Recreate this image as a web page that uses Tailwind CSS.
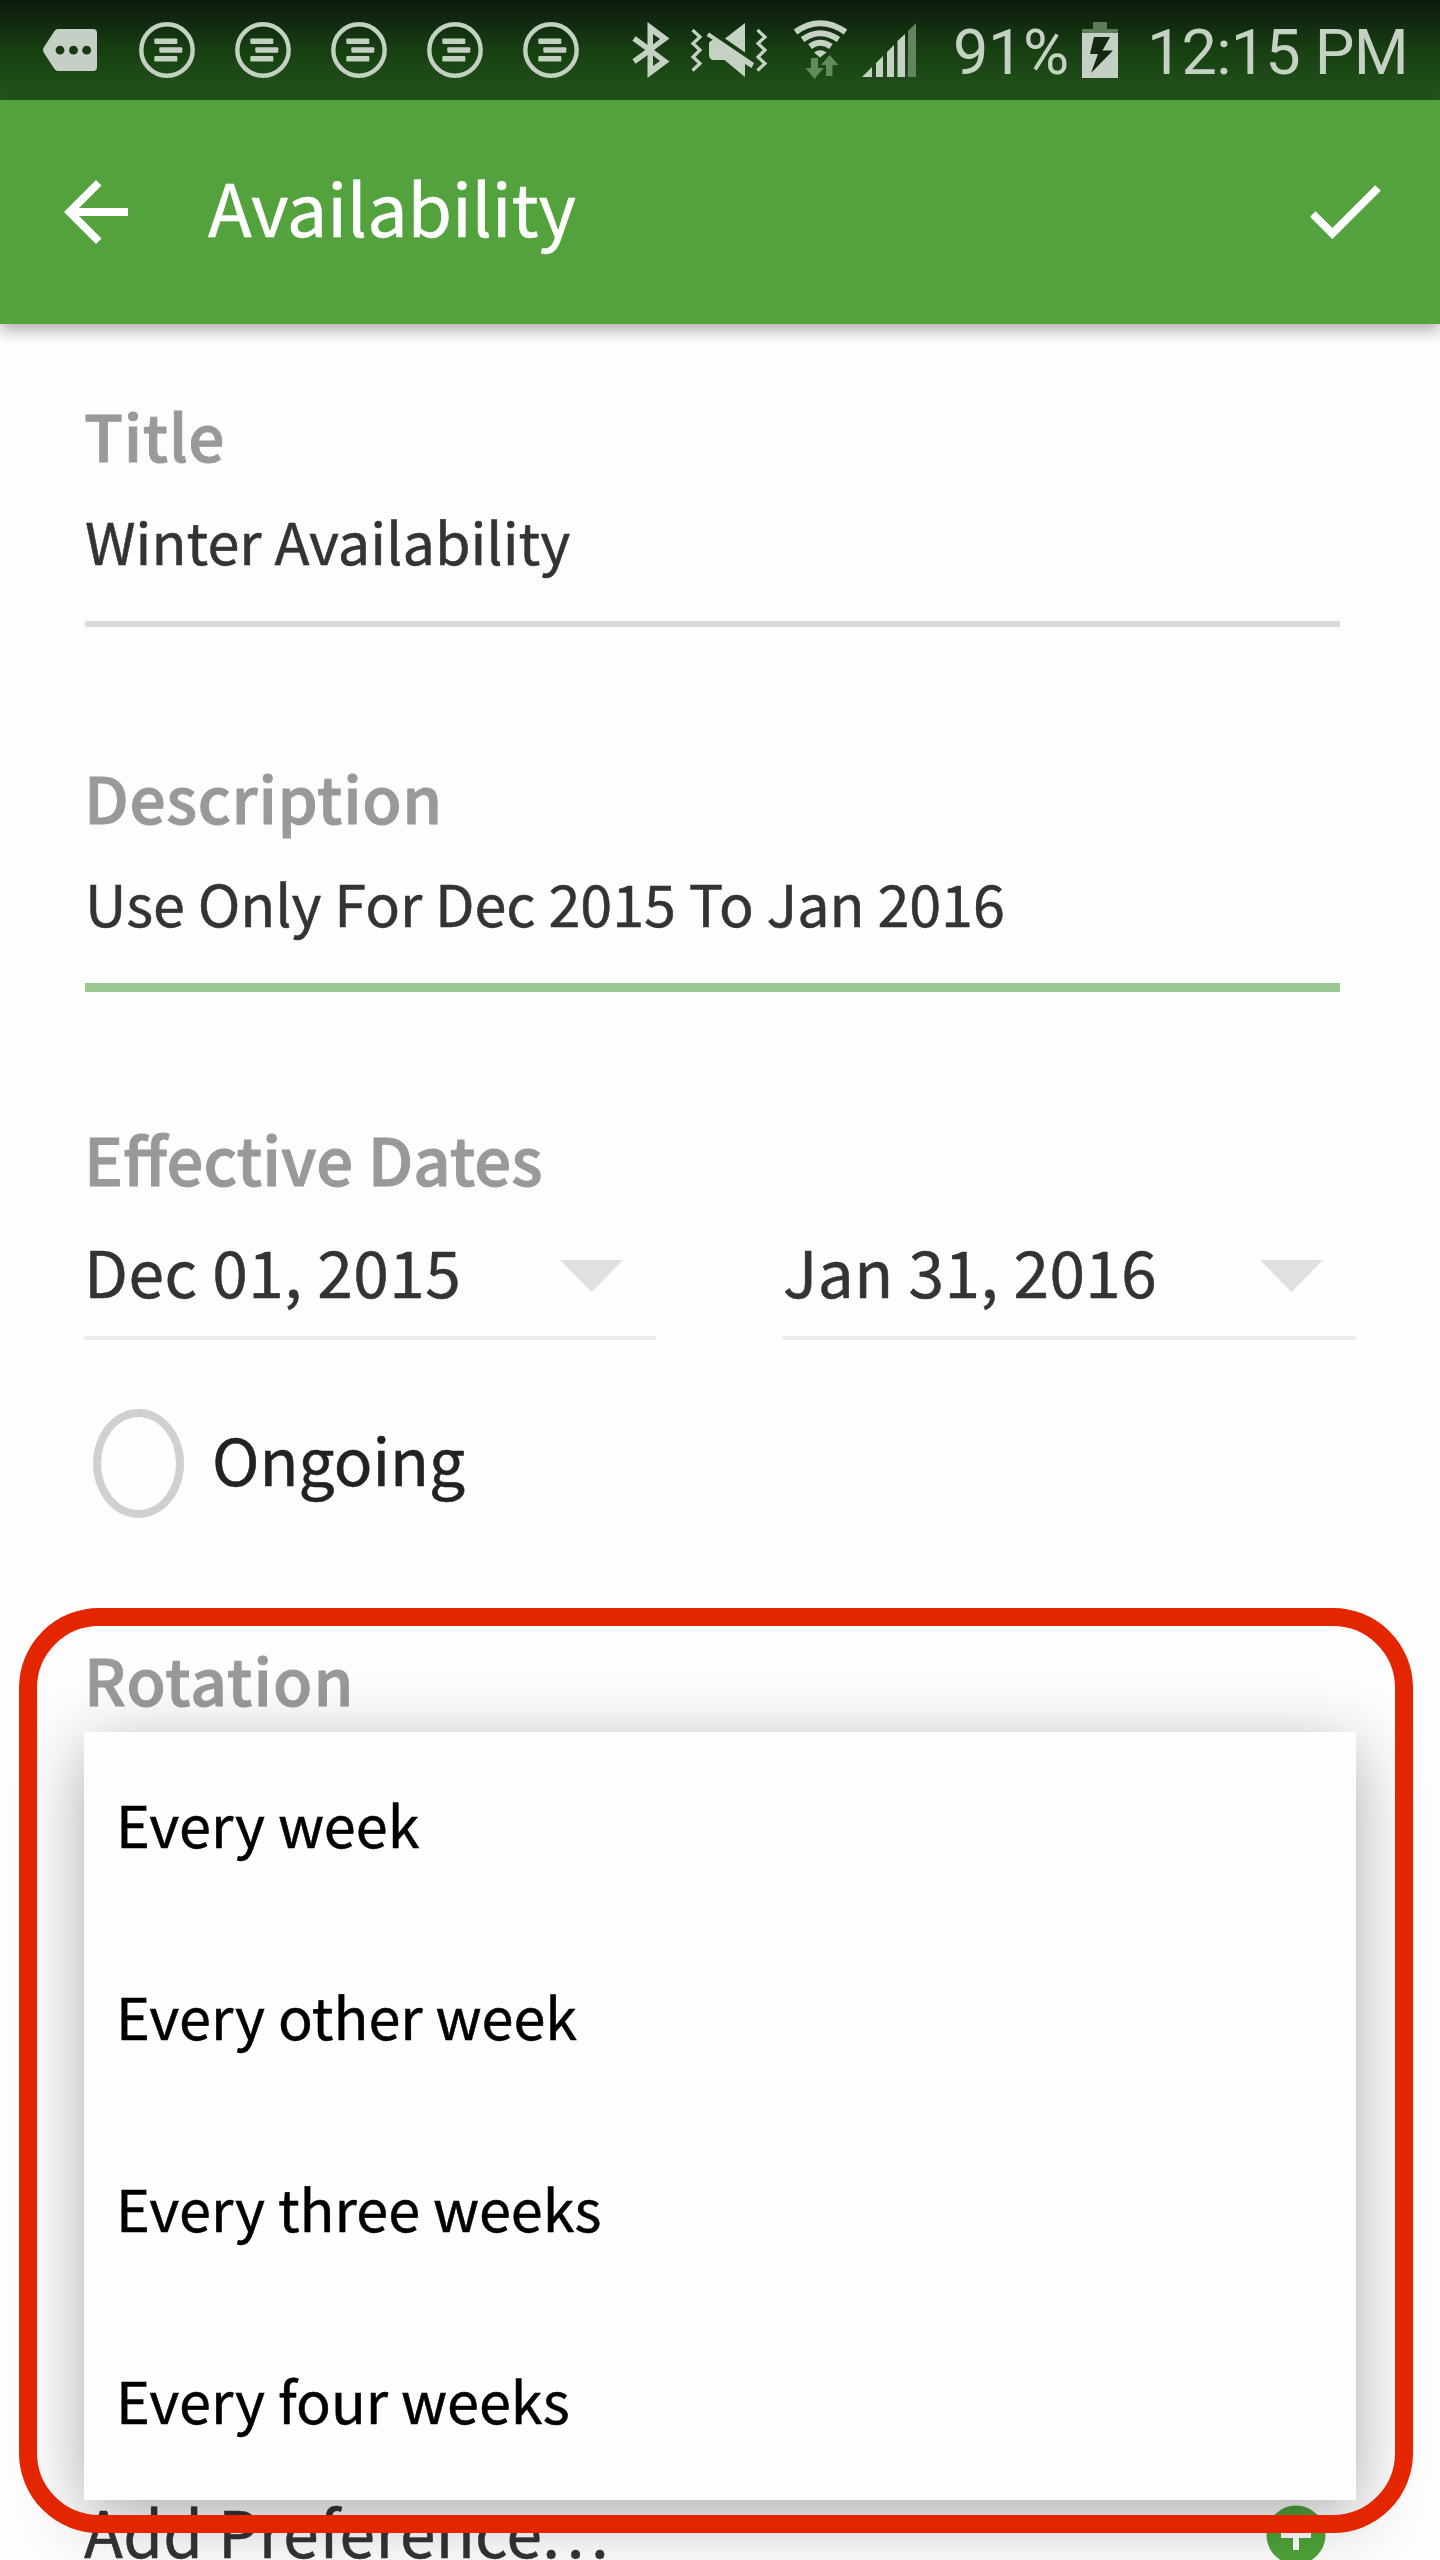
<!DOCTYPE html>
<html lang="en">
<head>
<meta charset="utf-8">
<title>Availability</title>
<script src="https://cdn.jsdelivr.net/npm/@tailwindcss/browser@4"></script>
</head>
<body class="bg-[#fdfdfd]">
<svg class="hidden">
  <symbol id="note" viewBox="0 0 56 56">
    <circle cx="28" cy="28" r="25.7" fill="none" stroke="#c3d2c0" stroke-width="4.4"/>
    <g fill="#c3d2c0"><rect x="15.3" y="16.5" width="23" height="5.6" rx="1"/><rect x="20.3" y="25.2" width="23" height="5.6" rx="1"/><rect x="15.3" y="34" width="23" height="5.6" rx="1"/></g>
  </symbol>
</svg>
<div class="relative flex h-[2560px] w-[1440px] flex-col overflow-hidden font-['Noto_Sans_CJK_SC',sans-serif] text-[#333]">
  <!-- status bar -->
  <header class="flex h-[100px] shrink-0 items-center bg-linear-to-b from-[#0b1a0c] via-[#183f12] to-[#23551c] pl-[42px] font-[Roboto,sans-serif] text-[63px] text-[#c5d2c3]">
    <svg class="h-[44px] w-[56px] shrink-0" viewBox="0 0 56 44"><path d="M16 1H51Q55 1 55 5V39Q55 43 51 43H16Q14 43 12.500 41L2 25Q0 22 2 19L12.500 3Q14 1 16 1Z" fill="#c6cfc6"/><g fill="#163b10"><circle cx="18" cy="22.200" r="4.400"/><circle cx="31.500" cy="22.200" r="4.400"/><circle cx="44.700" cy="22.200" r="4.400"/></g></svg>
    <div class="ml-[41px] flex shrink-0 gap-[40px]">
      <svg class="size-[56px]"><use href="#note"/></svg>
      <svg class="size-[56px]"><use href="#note"/></svg>
      <svg class="size-[56px]"><use href="#note"/></svg>
      <svg class="size-[56px]"><use href="#note"/></svg>
      <svg class="size-[56px]"><use href="#note"/></svg>
    </div>
    <svg class="ml-[41px] h-[100px] w-[304px] shrink-0" viewBox="620 0 304 100" fill="#c5d2c3">
      <path d="M647.500 22V78L669.500 61.500L654 50L669.500 38.500ZM653 34L660 39L653 44.500ZM653 55.500L660 61L653 66Z" fill-rule="evenodd"/>
      <path d="M634 38.500L650 50L634 61.500" fill="none" stroke="#c5d2c3" stroke-width="5.500"/>
      <g fill="none" stroke="#c5d2c3" stroke-width="3.200"><path d="M692.500 30L700 37L693 43.500L700 50L693 57L700 63.500L692.500 70.500"/><path d="M757.500 30L765 37L758 43.500L765 50L758 57L765 63.500L757.500 70.500"/></g>
      <path d="M745 23V52.500L725 38.500ZM709 32.500L754 63L751.500 68L745 64V77L724.500 60H714Q709 60 709 54V44Q709 41 713 40L706.500 36Z"/>
      <g fill="none" stroke="#c5d2c3" stroke-width="6"><path d="M795.500 32Q820 14.500 845.500 32"/><path d="M802.500 39.500Q820 27 838.500 39.500"/><path d="M810 46.500Q820 39 831 46.500"/></g>
      <path d="M814 52.500Q820 48 826.500 52.500L820 57.500Z"/>
      <path d="M811 58H818V68H823.500L814.500 79L805.500 68H811ZM826 76V65H821L829.500 55L838.500 65H832.500V76Z" fill="#628a5a"/>
      <path d="M862 77L872 67V77ZM876 77V63L883 56V77ZM887 77V52L894 45V77ZM897.500 77V41L905 34V77Z"/>
      <path d="M908 77V31L916 23V77Z" fill="#64835f"/>
    </svg>
    <span class="ml-[29px] w-[129px] shrink-0 whitespace-nowrap pt-[6px] leading-[76px] tracking-[-0.4px]">91%</span>
    <svg class="h-[58px] w-[36px] shrink-0" viewBox="0 0 36 58"><path d="M11 1H25V8H36V12H0V8H11Z" fill="#5d7a59"/><path d="M0 12H36V57H0Z" fill="#c5d0c5"/><path d="M12 16H28L20.500 29.500H31L9 52L16 33H8Z" fill="#152812"/></svg>
    <span class="ml-[29px] shrink-0 whitespace-nowrap pt-[6px] leading-[76px] tracking-[-0.8px]">12:15 PM</span>
  </header>
  <!-- app bar -->
  <div class="flex h-[224px] shrink-0 items-center bg-[#54a23e] pl-[64px] text-white shadow-[0_6px_14px_rgba(20,15,30,0.34)]">
    <svg class="h-[66px] w-[64px]" viewBox="0 0 64 66"><path d="M32 1L37.500 6.500L15 29H64V37H15L37.500 59.500L32 65L0 33Z" fill="#fff"/></svg>
    <h1 class="mb-[12px] ml-[80px] flex-1 text-[72px] leading-[72px] tracking-[-0.15px] [-webkit-text-stroke:0.5px_#fff]">Availability</h1>
    <svg class="mr-[59px] h-[54px] w-[71px]" viewBox="0 0 71 54"><path d="M2.800 29L22.300 48.500L68 3" fill="none" stroke="#fff" stroke-width="8"/></svg>
  </div>
  <main class="flex flex-col pl-[85px]">
    <label class="-ml-px mt-[78px] text-[64px] font-medium leading-[64px] tracking-[0.6px] text-[#999] [-webkit-text-stroke:1px_#999]">Title</label>
    <div class="mt-[42px] h-[113px] text-[57.6px] leading-[64px] [-webkit-text-stroke:0.5px_#333]">Winter Availability</div>
    <div class="h-[6px] w-[1255px] bg-[#dadada]"></div>
    <label class="-ml-px mt-[137px] text-[64px] font-medium leading-[64px] tracking-[0.7px] text-[#999] [-webkit-text-stroke:1px_#999]">Description</label>
    <div class="mt-[42px] h-[113px] text-[57.5px] leading-[64px] tracking-[-0.05px] [-webkit-text-stroke:0.5px_#333]">Use Only For Dec 2015 To Jan 2016</div>
    <div class="h-[9px] w-[1255px] bg-[#9bc790]"></div>
    <label class="-ml-px mt-[134px] text-[65.2px] font-medium leading-[64px] text-[#999] [-webkit-text-stroke:1px_#999]">Effective Dates</label>
    <div class="-ml-px mt-[46px] flex gap-[127px]">
      <div class="flex h-[104px] w-[572px] justify-between border-b-4 border-[#ebebeb] pr-[33px] text-[64px] leading-[68px] tracking-[0.45px] [-webkit-text-stroke:0.5px_#333]"><span>Dec 01, 2015</span><svg class="mt-[24px] h-[32px] w-[63px]" viewBox="0 0 63 32"><path d="M0 0H63L31.500 32Z" fill="#e0e0e0"/></svg></div>
      <div class="flex h-[104px] w-[573px] justify-between border-b-4 border-[#ebebeb] pr-[33px] text-[64px] leading-[68px] tracking-[0.45px] [-webkit-text-stroke:0.5px_#333]"><span>Jan 31, 2016</span><svg class="mt-[24px] h-[32px] w-[63px]" viewBox="0 0 63 32"><path d="M0 0H63L31.500 32Z" fill="#e0e0e0"/></svg></div>
    </div>
    <div class="mt-[69px] flex h-[109px] items-center pl-[8px] text-[64px] text-[#222]">
      <span class="h-[109px] w-[91px] rounded-[50%] border-8 border-[#d0d0d0]"></span>
      <span class="mb-[12px] ml-[28px] leading-[64px] [-webkit-text-stroke:0.5px_#222]">Ongoing</span>
    </div>
    <label class="-ml-px mt-[128px] text-[64px] font-medium leading-[64px] tracking-[1.1px] text-[#999] [-webkit-text-stroke:1px_#999]">Rotation</label>
    <div class="-ml-px mt-[788px] flex justify-between pr-[114px] text-[64px] leading-[64px] tracking-[0.35px] [-webkit-text-stroke:0.5px_#333]"><span>Add Preference<span class="tracking-[6.5px]">...</span></span><svg class="mt-[7px] size-[60px]" viewBox="0 0 60 60"><circle cx="30" cy="30" r="29.500" fill="#4fa23a"/><path d="M27 15H33V27H45V33H33V45H27V33H15V27H27Z" fill="#fff"/></svg></div>
  </main>
  <!-- rotation menu -->
  <ul class="absolute left-[84px] top-[1732px] h-[768px] w-[1272px] bg-[#fdfdfd] pl-[32px] text-[57.6px] text-black shadow-[0_16px_64px_rgba(0,0,0,0.32)] [-webkit-text-stroke:0.5px_#000]">
    <li class="h-[192px] leading-[182px]">Every week</li>
    <li class="h-[192px] leading-[182px]">Every other week</li>
    <li class="h-[192px] leading-[182px]">Every three weeks</li>
    <li class="h-[192px] leading-[182px]">Every four weeks</li>
  </ul>
  <div class="absolute left-[19px] top-[1608px] h-[925px] w-[1394px] rounded-[80px] border-[18px] border-[#e32500]"></div>
</div>
</body>
</html>
